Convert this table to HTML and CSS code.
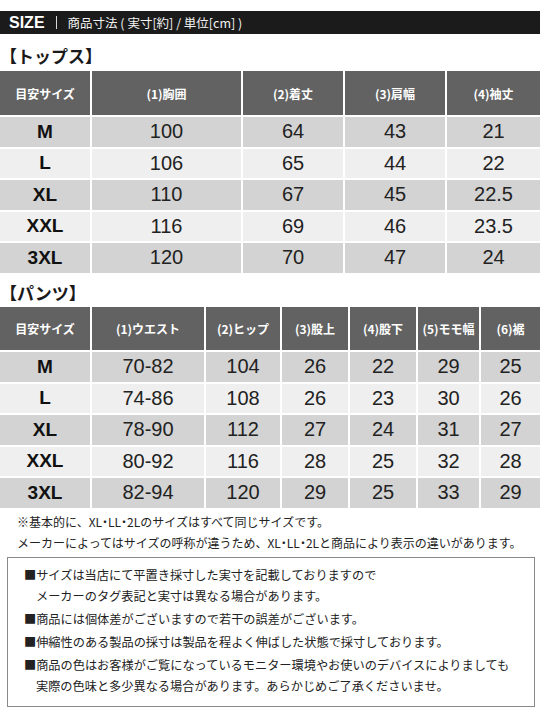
FILE: index.html
```html
<!DOCTYPE html>
<html lang="ja">
<head>
<meta charset="utf-8">
<title>SIZE</title>
<link rel="stylesheet" href="styles.css">
</head>
<body>
<div class="page">
  <div class="topbar"><span class="size">SIZE</span><span class="sep"></span><span class="unit">商品寸法 ( 実寸[約] / 単位[cm] )</span></div>

  <div class="title title-tops">【トップス】</div>
  <div class="grid tops">
    <div class="h">目安サイズ</div><div class="h">(1)胸囲</div><div class="h">(2)着丈</div><div class="h">(3)肩幅</div><div class="h">(4)袖丈</div>
    <div class="s d">M</div><div class="n d">100</div><div class="n d">64</div><div class="n d">43</div><div class="n d">21</div>
    <div class="s l">L</div><div class="n l">106</div><div class="n l">65</div><div class="n l">44</div><div class="n l">22</div>
    <div class="s d">XL</div><div class="n d">110</div><div class="n d">67</div><div class="n d">45</div><div class="n d">22.5</div>
    <div class="s l">XXL</div><div class="n l">116</div><div class="n l">69</div><div class="n l">46</div><div class="n l">23.5</div>
    <div class="s d">3XL</div><div class="n d">120</div><div class="n d">70</div><div class="n d">47</div><div class="n d">24</div>
  </div>

  <div class="title title-pants">【パンツ】</div>
  <div class="grid pants">
    <div class="h">目安サイズ</div><div class="h">(1)ウエスト</div><div class="h">(2)ヒップ</div><div class="h">(3)股上</div><div class="h">(4)股下</div><div class="h">(5)モモ幅</div><div class="h">(6)裾</div>
    <div class="s d">M</div><div class="n d">70-82</div><div class="n d">104</div><div class="n d">26</div><div class="n d">22</div><div class="n d">29</div><div class="n d">25</div>
    <div class="s l">L</div><div class="n l">74-86</div><div class="n l">108</div><div class="n l">26</div><div class="n l">23</div><div class="n l">30</div><div class="n l">26</div>
    <div class="s d">XL</div><div class="n d">78-90</div><div class="n d">112</div><div class="n d">27</div><div class="n d">24</div><div class="n d">31</div><div class="n d">27</div>
    <div class="s l">XXL</div><div class="n l">80-92</div><div class="n l">116</div><div class="n l">28</div><div class="n l">25</div><div class="n l">32</div><div class="n l">28</div>
    <div class="s d">3XL</div><div class="n d">82-94</div><div class="n d">120</div><div class="n d">29</div><div class="n d">25</div><div class="n d">33</div><div class="n d">29</div>
  </div>

  <div class="notes">
    <p>※基本的に、<span class="pt">XL・LL・2L</span>のサイズはすべて同じサイズです。</p>
    <p>メーカーによってはサイズの呼称が違うため、<span class="pt">XL・LL・2L</span>と商品により表示の違いがあります。</p>
  </div>

  <div class="box">
    <p>■サイズは当店にて平置き採寸した実寸を記載しておりますので<br>メーカーのタグ表記と実寸は異なる場合があります。</p>
    <p>■商品には個体差がございますので若干の誤差がございます。</p>
    <p>■伸縮性のある製品の採寸は製品を程よく伸ばした状態で採寸しております。</p>
    <p>■商品の色はお客様がご覧になっているモニター環境やお使いのデバイスによりましても<br>実際の色味と多少異なる場合があります。あらかじめご了承くださいませ。</p>
  </div>
</div>
</body>
</html>
```

FILE: styles.css
```css
* { box-sizing: border-box; }
html, body { margin: 0; padding: 0; background: #fff; }
body {
  font-family: "Noto Sans CJK JP", "Noto Sans", sans-serif;
  color: #222;
  width: 540px;
}
.page { width: 540px; }

.topbar {
  margin-top: 11px;
  height: 23px;
  background: #1b1b1b;
  color: #fff;
  display: flex;
  align-items: center;
  padding-left: 9px;
}
.topbar .size {
  font-family: "Liberation Sans", Arial, sans-serif;
  font-weight: bold;
  font-size: 16px;
  line-height: 23px;
}
.topbar .sep {
  display: inline-block;
  width: 1px;
  height: 13px;
  background: #d8d8d8;
  margin: 0 11px 0 11px;
}
.topbar .unit {
  font-size: 12.5px;
  line-height: 23px;
  color: #f2f2f2;
}

.title {
  font-weight: bold;
  font-size: 17px;
  color: #1a1a1a;
}
.title-tops { padding-top: 6px; line-height: 31px; height: 37px; }
.title-pants { padding-top: 6px; line-height: 28.5px; height: 34.5px; }

.grid {
  display: grid;
  gap: 2px;
  background: #fff;
}
.tops {
  grid-template-columns: 90px 149px 100px 100px 1fr;
  grid-template-rows: 44px repeat(5, 29.5px);
}
.pants {
  grid-template-columns: 90px 112px 74px 66px 66px 61px 1fr;
  grid-template-rows: 43px repeat(5, 29.5px);
}
.grid > div {
  display: flex;
  align-items: center;
  justify-content: center;
  white-space: nowrap;
}
.h {
  background: #626262;
  color: #fff;
  font-weight: bold;
  font-size: 12px;
}
.d { background: #d3d3d3; }
.l { background: #efefef; }
.s {
  font-family: "Liberation Sans", Arial, sans-serif;
  font-weight: bold;
  font-size: 19px;
  color: #111;
}
.n {
  font-family: "Liberation Sans", Arial, sans-serif;
  font-size: 20px;
  color: #222;
}

.notes {
  padding-top: 3.5px;
  padding-left: 17px;
  font-size: 12px;
  color: #222;
}
.notes p {
  margin: 0;
  line-height: 21px;
  white-space: nowrap;
}
.pt { font-feature-settings: "palt"; }

.box {
  margin: 4px 5px 0 7px;
  border: 1px solid #8a8a8a;
  padding: 7px 0 9px 16px;
  font-size: 12.2px;
  color: #222;
}
.box p {
  margin: 0 0 2px 0;
  line-height: 21px;
  padding-left: 12px;
  text-indent: -12px;
  white-space: nowrap;
}
.box p:last-child { margin-bottom: 0; }
```
